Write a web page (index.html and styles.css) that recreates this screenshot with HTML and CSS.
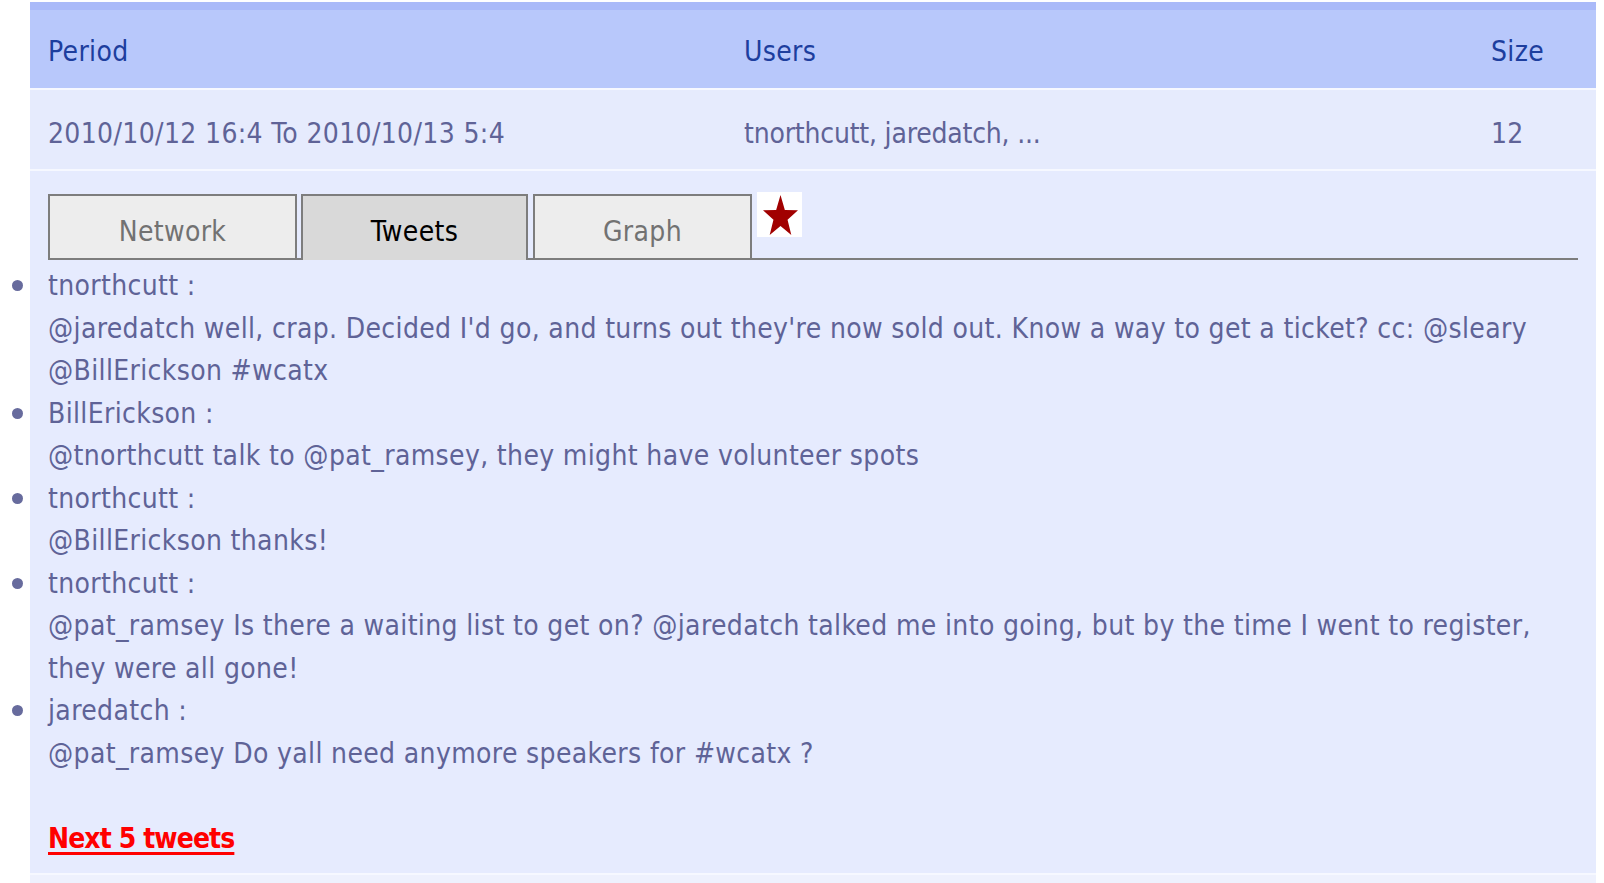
FILE: index.html
```html
<!DOCTYPE html>
<html lang="en">
<head>
<meta charset="utf-8">
<title>Cluster tweets</title>
<link rel="stylesheet" href="styles.css">
</head>
<body>
<div class="page">
  <div class="table">
    <div class="row head">
      <div class="cell">Period</div>
      <div class="cell">Users</div>
      <div class="cell">Size</div>
    </div>
    <div class="row data">
      <div class="cell">2010/10/12 16:4 To 2010/10/13 5:4</div>
      <div class="cell users">tnorthcutt, jaredatch, ...</div>
      <div class="cell">12</div>
    </div>
    <div class="detail">
      <div class="tabbar">
        <div class="tab tab-network">Network</div>
        <div class="tab tab-tweets active">Tweets</div>
        <div class="tab tab-graph">Graph</div>
        <div class="star">
          <svg width="45" height="45" viewBox="0 0 45 45"><polygon fill="#a10000" points="23.5,3 27.85,17.98 41,18.27 30.54,27.82 34.32,42.98 23.5,33.9 12.68,42.98 16.46,27.82 6,18.27 19.15,17.98"/></svg>
        </div>
      </div>
      <ul class="tweets">
        <li><div class="user">tnorthcutt :</div><div class="text">@jaredatch well, crap. Decided I'd go, and turns out they're now sold out. Know a way to get a ticket? cc: @sleary @BillErickson #wcatx</div></li>
        <li><div class="user">BillErickson :</div><div class="text">@tnorthcutt talk to @pat_ramsey, they might have volunteer spots</div></li>
        <li><div class="user">tnorthcutt :</div><div class="text">@BillErickson thanks!</div></li>
        <li><div class="user">tnorthcutt :</div><div class="text">@pat_ramsey Is there a waiting list to get on? @jaredatch talked me into going, but by the time I went to register, they were all gone!</div></li>
        <li><div class="user">jaredatch :</div><div class="text">@pat_ramsey Do yall need anymore speakers for #wcatx ?</div></li>
      </ul>
      <p class="more"><a href="#">Next 5 tweets</a></p>
    </div>
    <div class="tail"></div>
  </div>
</div>
</body>
</html>
```

FILE: styles.css
```css
html, body {
  margin: 0;
  padding: 0;
  background: #ffffff;
}

body {
  font-family: "DejaVu Sans Condensed", "DejaVu Sans", sans-serif;
  font-stretch: condensed;
  font-size: 28px;
  letter-spacing: 0.35px;
  color: #5f6397;
}

.page {
  padding: 2px 8px 0 30px;
}

.table {
  display: flex;
  flex-direction: column;
  gap: 2px;
  background: #f6f8ff;
}

.row {
  display: grid;
  grid-template-columns: 696px 747px 1fr;
}

.cell {
  padding-left: 18px;
  white-space: nowrap;
}

.cell.users {
  letter-spacing: -0.2px;
}

.head {
  background: #b8c8fb;
  border-top: 8px solid #aabaf9;
  height: 74px;
  padding-top: 4px;
  align-items: center;
  color: #1d3e9e;
}

.data {
  background: #e6ebfd;
  height: 71px;
  padding-top: 8px;
  align-items: center;
}

.detail {
  background: #e6ebfe;
  padding: 23px 18px 12px 18px;
}

.tabbar {
  display: flex;
  align-items: flex-start;
  border-bottom: 2px solid #7d7d7d;
}

.tab {
  box-sizing: border-box;
  height: 64px;
  border: 2px solid #7d7d7d;
  border-bottom: none;
  background: #ededed;
  color: #727272;
  text-align: center;
  padding-top: 15px;
  line-height: 42px;
}

.tab-network { width: 249px; }
.tab-tweets { width: 227px; margin-left: 4px; }
.tab-graph { width: 219px; margin-left: 5px; }

.tab.active {
  background: #d9d9d9;
  color: #000000;
  height: 66px;
  margin-bottom: -2px;
}

.star {
  width: 45px;
  height: 45px;
  margin-left: 5px;
  margin-top: -2px;
  background: #ffffff;
}

.star svg {
  display: block;
}

.tweets {
  margin: 5px 0 0 0;
  padding: 0;
  list-style: none;
  line-height: 42.5px;
}

.user::before {
  content: "";
  display: inline-block;
  width: 11px;
  height: 11px;
  border-radius: 50%;
  background: #676b9d;
  margin-left: -36px;
  margin-right: 25px;
  vertical-align: 4px;
}

.more {
  margin: 43px 0 0 0;
  line-height: 42.5px;
}

.more a {
  color: #ff0000;
  font-weight: bold;
  letter-spacing: -0.9px;
  text-decoration: underline;
  text-decoration-thickness: 3px;
  text-underline-offset: 4px;
}

.tail {
  height: 8px;
  background: #eef1fd;
}
```
